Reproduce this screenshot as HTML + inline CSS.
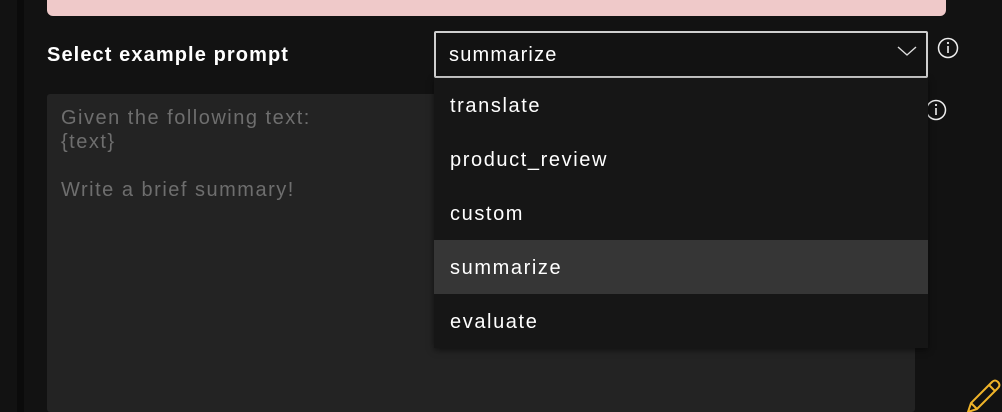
<!DOCTYPE html>
<html style="overflow:hidden;height:412px"><head><style>
body{margin:0;width:1002px;height:412px;background:#121212;position:relative;overflow:hidden;font-family:"Liberation Sans",sans-serif;}
.strip{position:absolute;left:17px;top:0;width:7px;height:412px;background:#0b0b0b}
.pink{position:absolute;left:47px;top:0;width:899px;height:16px;background:#efc9c9;border-radius:0 0 6px 6px}
.label{position:absolute;left:47px;top:44px;color:#fff;font-weight:bold;font-size:20px;letter-spacing:1.1px}
.sel{position:absolute;left:434px;top:31px;height:43px;border:2px solid #cfcfcf;border-radius:2px;background:#121212;color:#fff;font-size:20px;line-height:45px;padding-left:13px;width:477px;letter-spacing:1.2px}
.ta{position:absolute;left:47px;top:94px;width:868px;height:318px;background:#232323;border-radius:3px;color:#6e6e6e;font-size:20px;line-height:24px;padding:12px 14px;box-sizing:border-box;letter-spacing:1.5px}
.dd{position:absolute;left:434px;top:78px;width:494px;height:270px;background:#161616;box-shadow:0 2px 6px rgba(0,0,0,.5)}
.it{height:54px;line-height:56px;padding-left:16px;color:#fff;font-size:20px;letter-spacing:1.6px}
.hl{background:#363636}
</style></head><body>
<div class="strip"></div>
<div class="pink"></div>
<div class="label">Select example prompt</div>
<div class="ta">Given the following text:<br>{text}<br><br>Write a brief summary!</div>
<div class="sel">summarize</div>
<svg style="position:absolute;left:896px;top:44px" width="22" height="14"><path d="M2 3 L11 11 L20 3" fill="none" stroke="#ddd" stroke-width="1.4"/></svg>
<svg style="position:absolute;left:936px;top:36px" width="24" height="24"><circle cx="12" cy="12" r="9.5" fill="none" stroke="#eee" stroke-width="1.5"/><line x1="12" y1="10" x2="12" y2="17" stroke="#eee" stroke-width="1.6"/><circle cx="12" cy="7" r="1.1" fill="#eee"/></svg>
<svg style="position:absolute;left:924px;top:98px" width="24" height="24"><circle cx="12" cy="12" r="9.5" fill="none" stroke="#eee" stroke-width="1.5"/><line x1="12" y1="10" x2="12" y2="17" stroke="#eee" stroke-width="1.6"/><circle cx="12" cy="7" r="1.1" fill="#eee"/></svg>
<div class="dd">
<div class="it">translate</div>
<div class="it">product_review</div>
<div class="it">custom</div>
<div class="it hl">summarize</div>
<div class="it">evaluate</div>
</div>
<svg style="position:absolute;left:964px;top:378px" width="38" height="34"><path d="M4 34 L7 25 L28 4 Q31 1 34 4 Q37 7 34 10 L13 31 Z M7 25 L13 31 M25 7 L31 13" fill="none" stroke="#f0b429" stroke-width="2"/></svg>
</body></html>
